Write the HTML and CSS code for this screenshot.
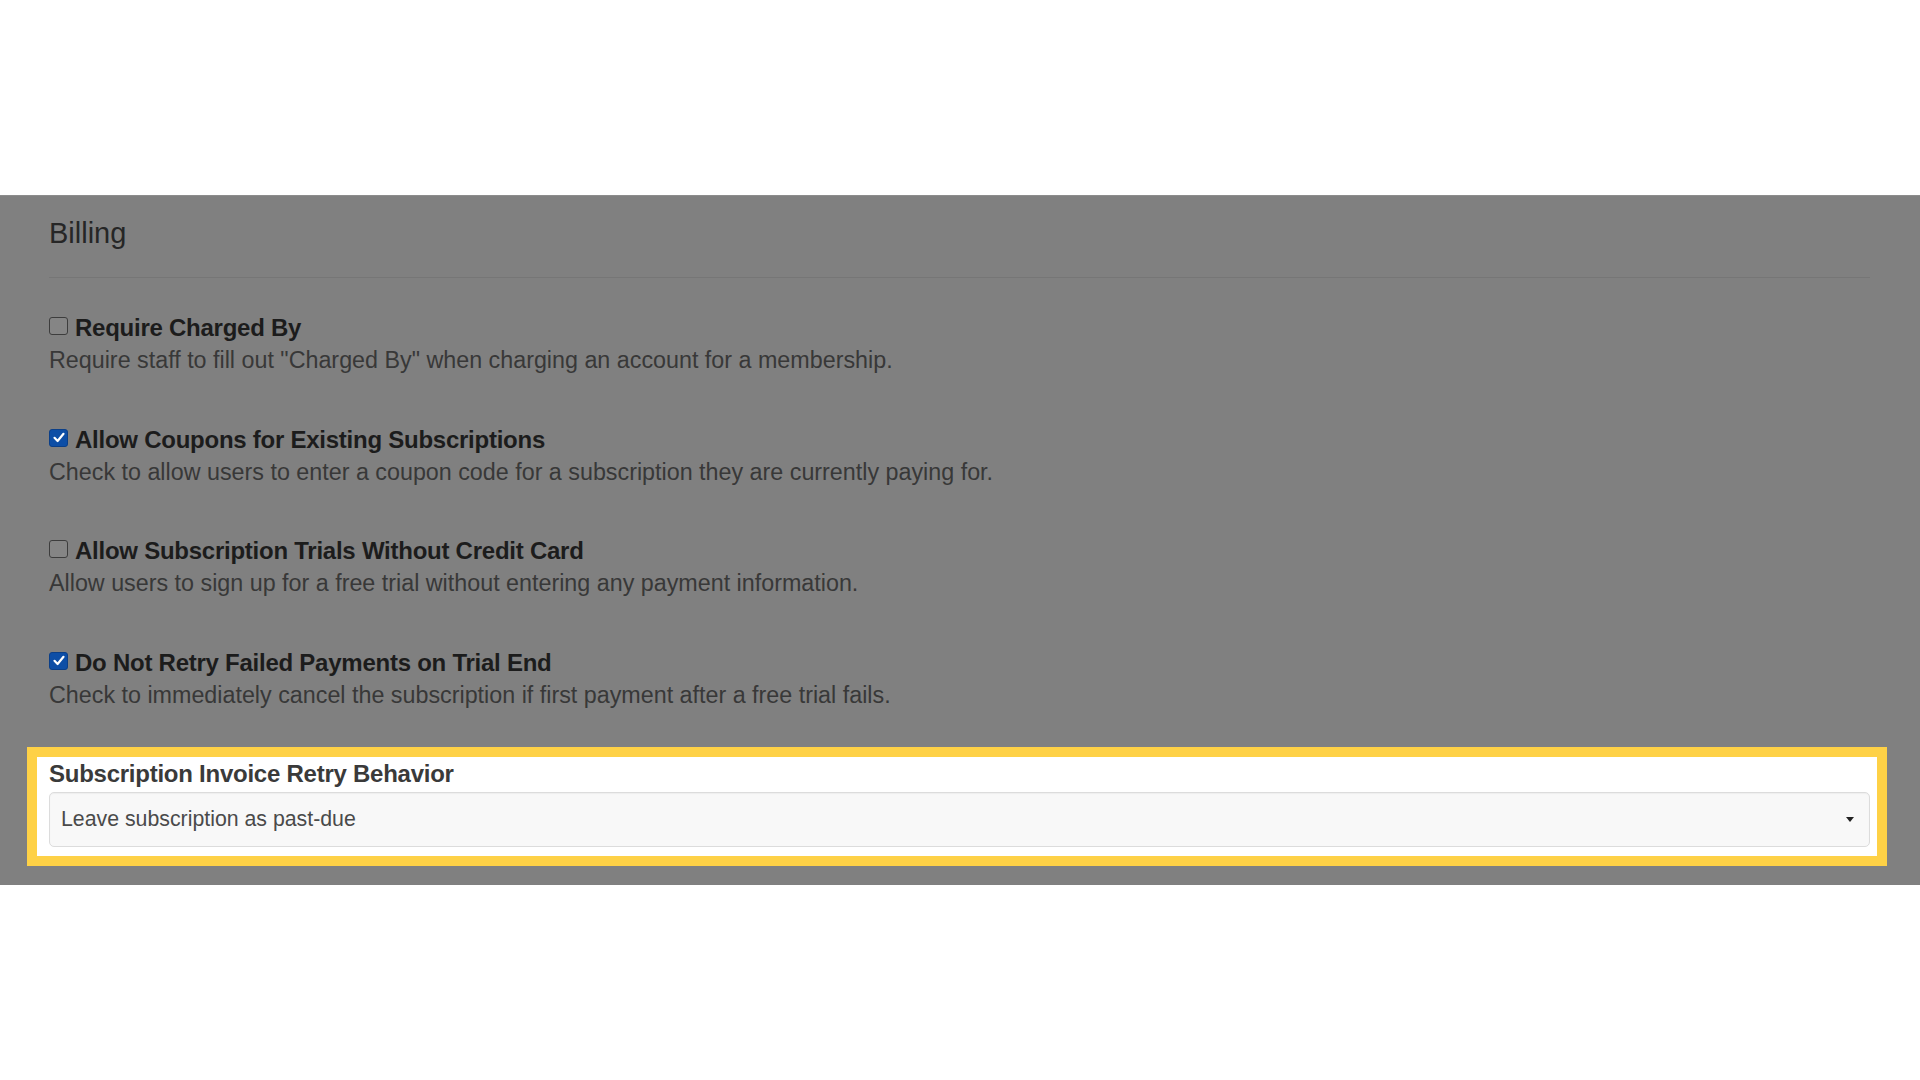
FILE: index.html
```html
<!DOCTYPE html>
<html lang="en">
<head>
<meta charset="utf-8">
<title>Billing</title>
<link rel="stylesheet" href="styles.css">
</head>
<body>
<div class="top-space"></div>
<section class="band">
  <h3 class="title">Billing</h3>
  <hr class="rule">
  <div class="item">
    <div class="label-row"><span class="cb"></span><span class="label">Require Charged By</span></div>
    <div class="desc">Require staff to fill out "Charged By" when charging an account for a membership.</div>
  </div>
  <div class="item">
    <div class="label-row"><span class="cb checked"><svg viewBox="0 0 18 17" width="18" height="17"><path d="M4.5 8.8 L7.6 12 L13.5 4.8" fill="none" stroke="#fff" stroke-width="2.2" stroke-linecap="round" stroke-linejoin="round"/></svg></span><span class="label">Allow Coupons for Existing Subscriptions</span></div>
    <div class="desc">Check to allow users to enter a coupon code for a subscription they are currently paying for.</div>
  </div>
  <div class="item">
    <div class="label-row"><span class="cb"></span><span class="label">Allow Subscription Trials Without Credit Card</span></div>
    <div class="desc">Allow users to sign up for a free trial without entering any payment information.</div>
  </div>
  <div class="item">
    <div class="label-row"><span class="cb checked"><svg viewBox="0 0 18 17" width="18" height="17"><path d="M4.5 8.8 L7.6 12 L13.5 4.8" fill="none" stroke="#fff" stroke-width="2.2" stroke-linecap="round" stroke-linejoin="round"/></svg></span><span class="label">Do Not Retry Failed Payments on Trial End</span></div>
    <div class="desc">Check to immediately cancel the subscription if first payment after a free trial fails.</div>
  </div>
  <div class="highlight">
    <div class="field-label">Subscription Invoice Retry Behavior</div>
    <div class="select">
      <span class="select-text">Leave subscription as past-due</span>
      <span class="caret"></span>
    </div>
  </div>
</section>
</body>
</html>
```

FILE: styles.css
```css
html, body {
  margin: 0;
  padding: 0;
  background: #ffffff;
  font-family: "Liberation Sans", Arial, Helvetica, sans-serif;
}

.top-space {
  height: 195px;
}

.band {
  background: #808080;
  border-top: 1px solid #8c8c8c;
  height: 690px;
  box-sizing: border-box;
  padding: 19px 50px 0 49px;
}

.title {
  margin: 0;
  font-size: 29px;
  line-height: 36px;
  font-weight: normal;
  color: #262626;
}

.rule {
  margin: 26px 0 0 0;
  border: 0;
  border-top: 1px solid #767676;
  height: 0;
}

.item {
  margin-top: 33px;
}

.item + .item {
  margin-top: 45.5px;
}

.label-row {
  display: flex;
  align-items: center;
  height: 33px;
}

.cb {
  width: 17px;
  height: 16px;
  border: 1px solid #3d3d3d;
  border-radius: 3px;
  background: #858585;
  margin-right: 7px;
  margin-top: -3px;
  flex: none;
  display: flex;
  align-items: center;
  justify-content: center;
}

.cb.checked {
  background: #0d4ea6;
  border-color: #0b3f88;
}

.cb svg {
  display: block;
  flex: none;
  margin: -1px;
}

.label {
  font-size: 24px;
  font-weight: bold;
  color: #1c1c1c;
  line-height: 33px;
  letter-spacing: -0.25px;
}

.desc {
  font-size: 23.3px;
  line-height: 33px;
  color: #383838;
}

.highlight {
  margin: 35.5px -17px 0 -22px;
  border: 10px solid #fed146;
  background: #ffffff;
  padding: 0 7px 9px 12px;
}

.field-label {
  font-size: 24px;
  font-weight: bold;
  line-height: 33px;
  color: #3a3a3a;
  letter-spacing: -0.25px;
}

.select {
  margin-top: 1.5px;
  height: 55px;
  box-sizing: border-box;
  border: 1px solid #dcdcdc;
  border-radius: 5px;
  background: #f8f8f8;
  box-shadow: inset 0 1px 1px rgba(0, 0, 0, 0.04);
  display: flex;
  align-items: center;
  justify-content: space-between;
  padding: 0 15px 0 11px;
}

.select-text {
  font-size: 21.3px;
  color: #4a4a4a;
}

.caret {
  width: 0;
  height: 0;
  border-left: 4px solid transparent;
  border-right: 4px solid transparent;
  border-top: 5px solid #222222;
}
```
